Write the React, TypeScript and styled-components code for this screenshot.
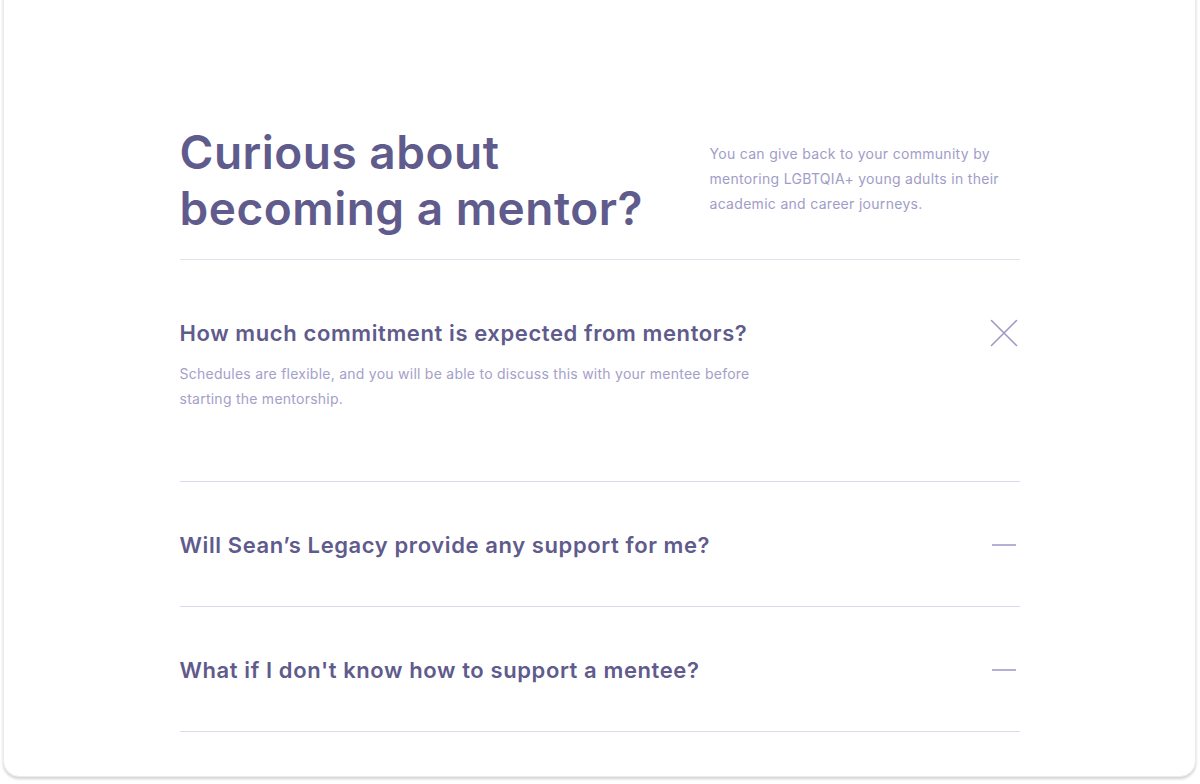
import React from "react";
import styled, { createGlobalStyle } from "styled-components";

const Global = createGlobalStyle`
  html, body { margin: 0; padding: 0; background: #ffffff; }
  body { font-family: "Inter", "DejaVu Sans", sans-serif; -webkit-font-smoothing: antialiased; }
  * { box-sizing: border-box; }
`;

const Page = styled.div`
  width: 1200px;
  height: 784px;
  overflow: hidden;
  padding: 0 4px 0 3px;
`;

const Card = styled.div`
  margin-top: -20px;
  height: 797px;
  background: #fff;
  border-radius: 16px;
  border: 1px solid #ececec;
  box-shadow: 0 2px 3px rgba(0, 0, 0, 0.18);
  display: flex;
  justify-content: center;
`;

const Content = styled.div`
  width: 840px;
  padding-top: 143px;
`;

const Header = styled.header`
  display: grid;
  grid-template-columns: 530px 1fr;
  padding-bottom: 23px;
  border-bottom: 1px solid #e3e2ec;
`;

const Title = styled.h1`
  margin: 0;
  font-size: 46px;
  line-height: 56px;
  font-weight: 600;
  color: #5f5b8c;
  letter-spacing: 0.5px;
`;

const Intro = styled.p`
  margin: 0;
  padding-top: 17px;
  font-size: 14px;
  line-height: 25px;
  color: #a19dc7;
  letter-spacing: 0.3px;
  max-width: 300px;
`;

const Item = styled.section<{ $open?: boolean }>`
  border-bottom: 1px solid #dcdaf0;
  padding: ${(p) => (p.$open ? "58px 0 70px" : "48px 0 46px")};
`;

const QRow = styled.div`
  display: flex;
  align-items: center;
  justify-content: space-between;
  height: 30px;
`;

const Question = styled.h2`
  margin: 0;
  font-size: 22px;
  line-height: 30px;
  font-weight: 600;
  color: #5f5b8c;
  letter-spacing: 0.6px;
`;

const Answer = styled.p`
  margin: 13px 0 0;
  font-size: 14px;
  line-height: 25px;
  color: #a4a0c9;
  letter-spacing: 0.25px;
  max-width: 600px;
`;

const IconBox = styled.span`
  display: flex;
  width: 28px;
  height: 28px;
  align-items: center;
  justify-content: center;
  margin-right: 2px;
`;

const CloseIcon = () => (
  <IconBox>
    <svg width="28" height="28" viewBox="0 0 28 28" fill="none">
      <path d="M1.5 1.5 L26.5 26.5 M26.5 1.5 L1.5 26.5" stroke="#9d99c2" strokeWidth="1.6" strokeLinecap="round" />
    </svg>
  </IconBox>
);

const DashIcon = () => (
  <IconBox>
    <svg width="28" height="28" viewBox="0 0 28 28" fill="none">
      <path d="M2 14 L26 14" stroke="#aaa7d0" strokeWidth="1.8" />
    </svg>
  </IconBox>
);

const faqs = [
  {
    q: "How much commitment is expected from mentors?",
    a: "Schedules are flexible, and you will be able to discuss this with your mentee before starting the mentorship.",
    open: true,
  },
  { q: "Will Sean\u2019s Legacy provide any support for me?", a: "", open: false },
  { q: "What if I don't know how to support a mentee?", a: "", open: false },
];

export default function App() {
  return (
    <>
      <Global />
      <Page>
        <Card>
          <Content>
            <Header>
              <Title>
                Curious about
                <br />
                becoming a mentor?
              </Title>
              <Intro>
                You can give back to your community by mentoring LGBTQIA+ young adults in their academic and career journeys.
              </Intro>
            </Header>
            {faqs.map((f) => (
              <Item key={f.q} $open={f.open}>
                <QRow>
                  <Question>{f.q}</Question>
                  {f.open ? <CloseIcon /> : <DashIcon />}
                </QRow>
                {f.open && <Answer>{f.a}</Answer>}
              </Item>
            ))}
          </Content>
        </Card>
      </Page>
    </>
  );
}
